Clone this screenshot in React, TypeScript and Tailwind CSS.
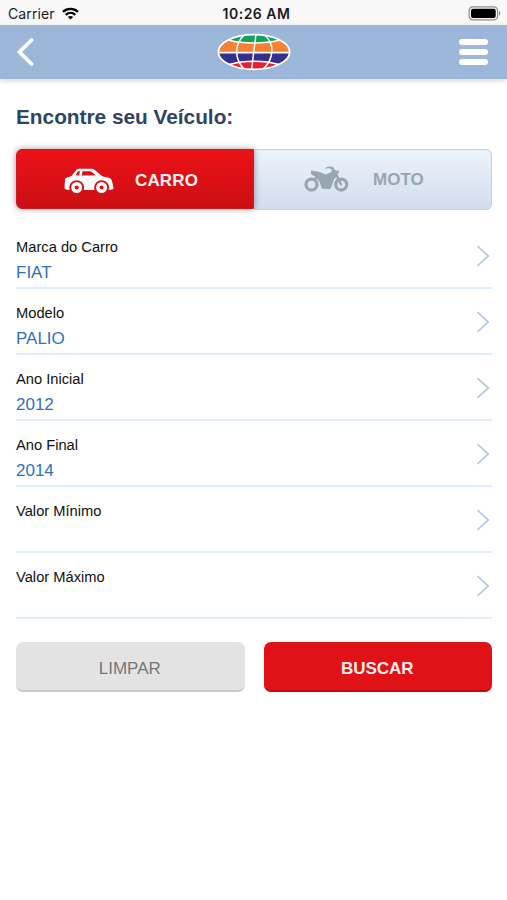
import clsx from 'clsx';

const fields = [
  { label: 'Marca do Carro', value: 'FIAT' },
  { label: 'Modelo', value: 'PALIO' },
  { label: 'Ano Inicial', value: '2012' },
  { label: 'Ano Final', value: '2014' },
  { label: 'Valor Mínimo', value: '' },
  { label: 'Valor Máximo', value: '' },
];

function StatusBar() {
  return (
    <div className="grid h-[25px] grid-cols-3 items-center bg-[#f8f8f8] pt-[2px] pr-[6px] pl-2 font-[Inter,sans-serif] leading-none text-[#1b1b1b]">
      <div className="flex items-center gap-[7px] text-[14px]">
        <span className="tracking-[0.1px]">Carrier</span>
        <svg width="17" height="13" viewBox="0 0 17 13" fill="none" stroke="#000" strokeWidth="2.3">
          <path d="M1 4.8C5.2.9 11.8.9 16 4.8" />
          <path d="M3.7 7.8c2.8-2.5 6.8-2.5 9.6 0" />
          <path d="M8.5 12.6 5.9 10c1.5-1.4 3.7-1.4 5.2 0z" fill="#000" stroke="none" />
        </svg>
      </div>
      <span className="pl-[4px] text-center text-[14px] font-semibold tracking-[0.5px] whitespace-nowrap">10:26 AM</span>
      <svg className="justify-self-end" width="33" height="15" viewBox="0 0 33 15">
        <rect x="1.1" y=".9" width="28.5" height="13" rx="3.8" fill="#f8f8f8" stroke="#8b8b8b" strokeWidth="1.2" />
        <rect x="3" y="2.7" width="24.7" height="9.4" rx="2" fill="#000" />
        <path d="M31 5.1c1.7.8 1.7 3.8 0 4.6z" fill="#858585" />
      </svg>
    </div>
  );
}

function Globe() {
  return (
    <svg className="ml-1" width="74" height="38" viewBox="0 0 74 38" fill="none" stroke="#fff">
      <defs>
        <clipPath id="globe">
          <ellipse cx="37" cy="19" rx="35.7" ry="17.4" />
        </clipPath>
      </defs>
      <g clipPath="url(#globe)" strokeWidth="1.5">
        <rect width="74" height="20" fill="#f58232" stroke="none" />
        <rect y="20" width="74" height="18" fill="#35308c" stroke="none" />
        <path d="M12-2v9.2c14 3.6 36 3.6 50 0V-2z" fill="#12a05a" />
        <path d="M12 40v-8.5c14-4.5 36-4.5 50 0V40z" fill="#e52330" />
        <path d="M0 19.7h74" strokeWidth="1.7" />
        <path d="M27 2C17 12 17 26 28 37M46 1c13 9 11 26-1 36M39 1 34.5 37" />
      </g>
      <ellipse cx="37" cy="19" rx="35.7" ry="17.4" strokeWidth="1.8" />
    </svg>
  );
}

function Header() {
  return (
    <header className="flex h-[54px] items-center justify-between bg-[#9db7db] pr-[19px] pl-4 shadow-[0_2px_5px_rgba(0,0,0,0.16)]">
      <button aria-label="Voltar" className="w-[30px]">
        <svg width="18" height="28" viewBox="0 0 18 28" fill="none" stroke="#fff" strokeWidth="3.8">
          <path d="M15.5 2 3.5 14l12 12" strokeLinecap="round" />
        </svg>
      </button>
      <Globe />
      <button aria-label="Menu" className="flex w-[30px] flex-col items-end gap-1">
        <span className="h-[6px] w-[29px] rounded-full bg-white" />
        <span className="h-[6px] w-[29px] rounded-full bg-white" />
        <span className="h-[6px] w-[29px] rounded-full bg-white" />
      </button>
    </header>
  );
}

function CarIcon() {
  return (
    <svg width="50" height="26" viewBox="0 0 50 26" fill="#fff">
      <path
        fillRule="evenodd"
        d="M12.5 1.8Q13.4.7 15 .7h12.5q1.7 0 3 1L38.2 8.200l6.500 1.600q3 .9 3.600 4.500l1.200 5.400q.2 1.500-1.500 1.700L44.600 22A7.400 7.400 0 1 0 30.600 22H19.700A7.400 7.400 0 1 0 5.700 22l-3.700-.5q-1.600-.3-1.500-2L1 11.600q.2-1.200 1.400-1.800L7.500 8zM14 3.200 11.500 7.200l3.400.2 1.200-4.200zM18.600 3.200l-.9 4.300h14.100L27.600 3.800q-.7-.6-1.700-.6z"
      />
      <circle cx="12.7" cy="19.5" r="3.8" fill="none" stroke="#fff" strokeWidth="3.4" />
      <circle cx="37.6" cy="19.5" r="3.8" fill="none" stroke="#fff" strokeWidth="3.4" />
    </svg>
  );
}

function MotoIcon() {
  return (
    <svg width="45" height="27" viewBox="0 0 45 27" fill="#98a5b3">
      <circle cx="7.5" cy="18.6" r="5.5" fill="none" stroke="#98a5b3" strokeWidth="3.2" />
      <circle cx="37.2" cy="18.6" r="5.5" fill="none" stroke="#98a5b3" strokeWidth="3.2" />
      <path d="m7 4.500 8.700 1.500 5.800 2.500 5.500-2.300 1-2.700-2.700-1.200-4.600.1Q25-.4 29.400 1.200l1.700 3.300 4.100.2-.5 2.500-2.200.5 1.800 3.400-4 1.300-2.800 8.200-1.300 2.500-8.200-.3-2.500-7-3.500-4.300-5-3.500z" />
      <path d="m14 10-3.500 3.500M31 5.500l6 13" fill="none" stroke="#98a5b3" strokeWidth="2.2" strokeLinecap="round" />
    </svg>
  );
}

function VehicleTabs() {
  return (
    <div className="flex h-[61px] text-[17px] leading-5 font-bold">
      <button className="relative flex h-[60px] w-[238px] items-center rounded-l-[6px] border border-[#d3181e] bg-linear-to-b from-[#ec1118] to-[#cb1014] pt-[3px] pl-[47px] text-[#fff0ee] shadow-[0_0_6px_rgba(0,0,0,0.4)]">
        <CarIcon />
        <span className="ml-[21px] tracking-[0.15px]">CARRO</span>
      </button>
      <button className="flex flex-1 items-center rounded-r-[6px] border border-l-0 border-[#c2d0e3] bg-linear-to-b from-[#ecf3fc] to-[#d1deed] pl-[50px] text-[#98a5b3]">
        <MotoIcon />
        <span className="ml-6">MOTO</span>
      </button>
    </div>
  );
}

function Field({ label, value }: { label: string; value: string }) {
  return (
    <button className="flex h-[66px] w-full items-center justify-between border-b-2 border-[#deecfb] text-left">
      <span className="flex h-full flex-col pt-[15px]">
        <span className="text-[14.7px] leading-[18px] text-[#111]">{label}</span>
        <span className="mt-[7px] text-[17px] leading-5 text-[#2f70bf]">{value}</span>
      </span>
      <svg width="14" height="22" viewBox="0 0 14 22" className="mt-px mr-[2px]" fill="none" stroke="#b4cae5" strokeWidth="1.8">
        <path d="m1.5 1.2 10.7 9.8L1.5 20.8" />
      </svg>
    </button>
  );
}

function ActionButton({ label, primary }: { label: string; primary?: boolean }) {
  return (
    <button
      className={clsx(
        'h-[50px] flex-1 rounded-[7px] border-b-2 pt-[5px] pr-px text-[17px]',
        primary ? 'border-[#b80d13] bg-[#e01217] font-bold text-[#ffeceb]' : 'border-[#c9c9c9] bg-[#e3e3e3] text-[#777]'
      )}
    >
      {label}
    </button>
  );
}

export default function App() {
  return (
    <div className="min-h-screen bg-white font-['Liberation_Sans',Arial,sans-serif]">
      <StatusBar />
      <Header />
      <main className="pr-[15px] pl-4">
        <h1 className="pt-[26px] text-[20.8px] leading-6 font-bold text-[#2d4564]">Encontre seu Veículo:</h1>
        <div className="mt-5">
          <VehicleTabs />
        </div>
        <div className="mt-[13px]">
          {fields.map((f) => (
            <Field key={f.label} label={f.label} value={f.value} />
          ))}
        </div>
        <div className="mt-[23px] flex gap-[19px]">
          <ActionButton label="LIMPAR" />
          <ActionButton label="BUSCAR" primary />
        </div>
      </main>
    </div>
  );
}
